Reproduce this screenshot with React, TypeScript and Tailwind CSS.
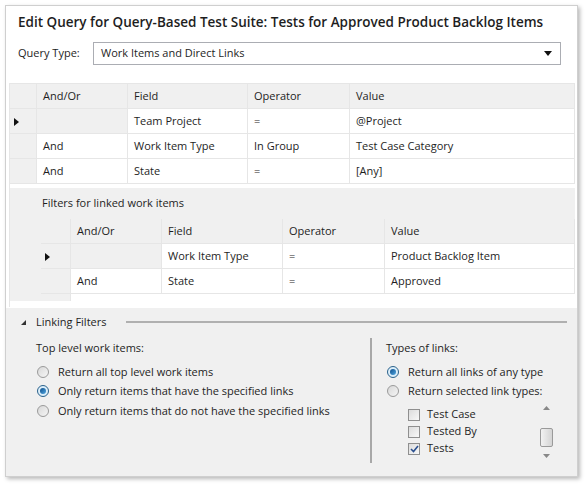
import React from 'react'

const FONT = { fontFamily: '"Open Sans", "Noto Sans", sans-serif' }

type Row = { andOr: string; field: string; op: string; value: string; current?: boolean; lockAndOr?: boolean }

const OUTER_ROWS: Row[] = [
  { andOr: '', field: 'Team Project', op: '=', value: '@Project', current: true, lockAndOr: true },
  { andOr: 'And', field: 'Work Item Type', op: 'In Group', value: 'Test Case Category' },
  { andOr: 'And', field: 'State', op: '=', value: '[Any]' },
]

const LINKED_ROWS: Row[] = [
  { andOr: '', field: 'Work Item Type', op: '=', value: 'Product Backlog Item', current: true, lockAndOr: true },
  { andOr: 'And', field: 'State', op: '=', value: 'Approved' },
]

function RowArrow() {
  return (
    <svg width="5" height="8" viewBox="0 0 5 8" className="block">
      <path d="M0 0 L5 4 L0 8 Z" fill="#111" />
    </svg>
  )
}

function QueryGrid({ rows, cols, rowHeader }: { rows: Row[]; cols: string; rowHeader: number }) {
  const cell = 'h-[25px] flex items-center pl-[6px] pt-[1px] border-r border-b border-[#e6e6e6] text-[11px] text-[#1e1e1e] whitespace-nowrap'
  return (
    <div className={`grid ${cols}`}>
      <div className="h-[25px] bg-[#f0f0f0] border-r border-b border-[#e6e6e6]" />
      {['And/Or', 'Field', 'Operator', 'Value'].map(h => (
        <div key={h} className={`${cell} bg-[#f0f0f0]`}>{h}</div>
      ))}
      {rows.map((r, i) => (
        <React.Fragment key={i}>
          <div className="h-[25px] bg-[#f0f0f0] border-r border-b border-[#e6e6e6] flex items-center pl-[4px] pt-[1px]" style={{ width: rowHeader }}>
            {r.current && <RowArrow />}
          </div>
          <div className={`${cell} ${r.lockAndOr ? 'bg-[#f0f0f0]' : 'bg-white'}`}>{r.andOr}</div>
          <div className={`${cell} bg-white`}>{r.field}</div>
          <div className={`${cell} bg-white`}>{r.op}</div>
          <div className={`${cell} bg-white`}>{r.value}</div>
        </React.Fragment>
      ))}
    </div>
  )
}

function Radio({ checked, label }: { checked?: boolean; label: string }) {
  return (
    <div className="h-[19.5px] flex items-center gap-[9px]">
      <span
        className={`w-[12px] h-[12px] rounded-full border flex items-center justify-center ${
          checked ? 'border-[#2c628b] bg-[#dbeefa]' : 'border-[#9a9a9a] bg-gradient-to-br from-[#d8d8d8] to-[#f6f6f6]'
        }`}
      >
        {checked && <span className="w-[6px] h-[6px] rounded-full bg-gradient-to-br from-[#0e4f8c] to-[#4fa6e0]" />}
      </span>
      <span className="text-[11px] text-[#1e1e1e]">{label}</span>
    </div>
  )
}

function Check({ checked, label }: { checked?: boolean; label: string }) {
  return (
    <div className="h-[17px] flex items-center gap-[7px]">
      <span className="w-[12px] h-[12px] border border-[#8f8f8f] bg-gradient-to-br from-[#dcdcdc] to-[#f8f8f8] flex items-center justify-center">
        {checked && (
          <svg width="9" height="8" viewBox="0 0 9 8">
            <path d="M1 4 L3.5 6.5 L8 1" stroke="#2a4f8f" strokeWidth="1.6" fill="none" />
          </svg>
        )}
      </span>
      <span className="text-[11px] text-[#1e1e1e]">{label}</span>
    </div>
  )
}

export default function App() {
  return (
    <div className="w-[586px] h-[486px] bg-white pt-[5px] pl-[5px]" style={FONT}>
      <div className="w-[573px] h-[472px] border border-[#cfcfcf] shadow-[2px_2px_4px_rgba(0,0,0,0.28)] bg-white flex flex-col">
        {/* Title */}
        <div className="pt-[6px] pl-[12px] h-[26px] text-[13.5px] leading-[20px] font-semibold text-[#1e1e1e] whitespace-nowrap">
          Edit Query for Query-Based Test Suite: Tests for Approved Product Backlog Items
        </div>

        {/* Query type */}
        <div className="mt-[10px] flex items-center pl-[12px] h-[23px]">
          <span className="w-[75px] text-[11px] text-[#1e1e1e]">Query Type:</span>
          <div className="w-[468px] h-[23px] border border-[#abadb3] flex items-center justify-between pl-[7px] pr-[8px]">
            <span className="text-[11px] text-[#1e1e1e]">Work Items and Direct Links</span>
            <svg width="8" height="5" viewBox="0 0 8 5">
              <path d="M0 0 L8 0 L4 5 Z" fill="#111" />
            </svg>
          </div>
        </div>

        {/* Grid area */}
        <div className="mt-[18px] ml-[3px] mr-[2px] h-[224px] bg-white border-l border-t border-[#e6e6e6] flex flex-col">
          <QueryGrid rows={OUTER_ROWS} cols="grid-cols-[27px_91px_120px_102px_1fr]" rowHeader={27} />
          <div className="mt-[4px] h-[113px] bg-[#f0f0f0] flex flex-col">
            <div className="pt-[7px] pl-[32px] h-[24px] text-[11px] leading-[16px] text-[#1e1e1e]">Filters for linked work items</div>
            <div className="mt-[7px] ml-[31px] flex-1 bg-white flex flex-col">
              <QueryGrid rows={LINKED_ROWS} cols="grid-cols-[30px_91px_121px_102px_1fr]" rowHeader={30} />
              <div className="flex-1 w-[30px] bg-[#f0f0f0] border-r border-[#e6e6e6]" />
            </div>
          </div>
        </div>

        {/* Linking filters */}
        <div className="mt-[1px] flex-1 bg-[#f0f0f0] flex flex-col">
          <div className="pt-[6px] h-[22px] flex items-center pl-[15px]">
            <svg width="5" height="5" viewBox="0 0 5 5" className="mr-[10px]">
              <path d="M5 0 L5 5 L0 5 Z" fill="#333" />
            </svg>
            <span className="text-[11px] text-[#1e1e1e]">Linking Filters</span>
            <div className="ml-[20px] mr-[10px] flex-1 h-[2px] bg-[#b0b0b0]" />
          </div>

          <div className="flex mt-[8px]">
            <div className="w-[364px] pl-[30px] pt-[2px]">
              <div className="h-[16px] flex items-center text-[11px] text-[#1e1e1e]">Top level work items:</div>
              <div className="mt-[6px] pl-[1px]">
                <Radio label="Return all top level work items" />
                <Radio checked label="Only return items that have the specified links" />
                <Radio label="Only return items that do not have the specified links" />
              </div>
            </div>
            <div className="w-[184px] h-[125px] border-l-2 border-[#a8a8a8] pl-[14px] pt-[2px]">
              <div className="h-[16px] flex items-center text-[11px] text-[#1e1e1e]">Types of links:</div>
              <div className="mt-[6px] pl-[1px]">
                <Radio checked label="Return all links of any type" />
                <Radio label="Return selected link types:" />
              </div>
              <div className="mt-[1px] flex h-[60px]">
                <div className="flex-1 pl-[22px] pt-[4px]">
                  <Check label="Test Case" />
                  <Check label="Tested By" />
                  <Check checked label="Tests" />
                </div>
                <div className="w-[15px] flex flex-col items-center bg-[#f0f0f0]">
                  <div className="h-[12px] flex items-center">
                    <svg width="7" height="4" viewBox="0 0 7 4"><path d="M0 4 L7 4 L3.5 0 Z" fill="#888" /></svg>
                  </div>
                  <div className="mt-[14px] w-[13px] h-[19px] border border-[#9a9a9a] rounded-[2px] bg-gradient-to-r from-[#f2f2f2] to-[#d4d4d4]" />
                  <div className="mt-auto h-[12px] flex items-center">
                    <svg width="7" height="4" viewBox="0 0 7 4"><path d="M0 0 L7 0 L3.5 4 Z" fill="#888" /></svg>
                  </div>
                </div>
              </div>
            </div>
          </div>
        </div>
      </div>
    </div>
  )
}
